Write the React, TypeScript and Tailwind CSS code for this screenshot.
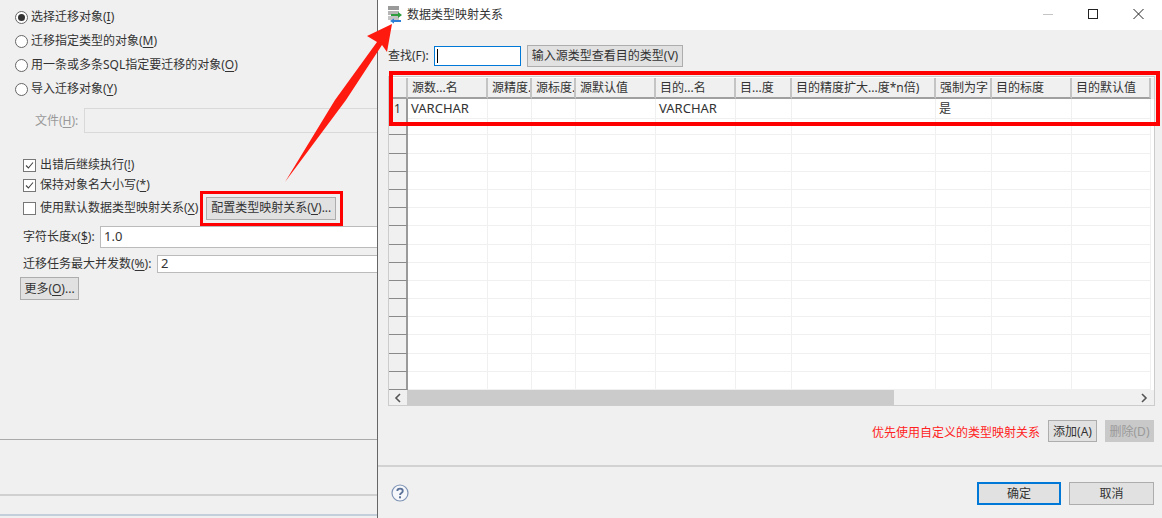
import React from "react";

const FONT = "[font-family:'Noto_Sans','Noto_Sans_CJK_SC',sans-serif]";
const ROW = "grid grid-cols-[19px_80px_44px_44px_80px_80px_56px_144px_56px_80px_79px]";

function M({ children }: { children: React.ReactNode }) {
  return <span className="underline underline-offset-2">{children}</span>;
}

function Radio({ on, children }: { on?: boolean; children: React.ReactNode }) {
  return (
    <div className="flex h-6 items-center pl-[15px]">
      <span className="flex h-[13px] w-[13px] items-center justify-center rounded-full border border-[#666] bg-white">
        {on && <span className="h-[7px] w-[7px] rounded-full bg-[#333]" />}
      </span>
      <span className="ml-[3px] whitespace-nowrap">{children}</span>
    </div>
  );
}

function Check({ on, children }: { on?: boolean; children: React.ReactNode }) {
  return (
    <div className="flex items-center">
      <span className="flex h-[13px] w-[13px] items-center justify-center border border-[#777] bg-white">
        {on && (
          <svg viewBox="0 0 11 11" className="h-[11px] w-[11px]" fill="none" stroke="#444" strokeWidth="1.1">
            <path d="M2 5.5 L4.4 8 L9 2.5" />
          </svg>
        )}
      </span>
      <span className="ml-1 whitespace-nowrap">{children}</span>
    </div>
  );
}

function LeftPanel() {
  return (
    <div className="flex h-full w-[378px] shrink-0 flex-col border-r border-[#666] bg-[#f0f0f0] pt-[5px]">
      <Radio on>选择迁移对象(<M>I</M>)</Radio>
      <Radio>迁移指定类型的对象(<M>M</M>)</Radio>
      <Radio>用一条或多条SQL指定要迁移的对象(<M>O</M>)</Radio>
      <Radio>导入迁移对象(<M>Y</M>)</Radio>
      <div className="mt-[7px] flex h-[25px] items-center pl-[35px] text-[#999]">
        <span className="w-[49px] whitespace-nowrap">文件(<M>H</M>):</span>
        <div className="h-full flex-1 border border-r-0 border-[#d9d9d9] bg-[#f0f0f0]" />
      </div>
      <div className="mt-[22px] flex h-5 items-center pl-[23px]">
        <Check on>出错后继续执行(<M>!</M>)</Check>
      </div>
      <div className="flex h-5 items-center pl-[23px]">
        <Check on>保持对象名大小写(<M>*</M>)</Check>
      </div>
      <div className="mt-px flex h-6 items-center pl-[23px]">
        <Check>使用默认数据类型映射关系(<M>X</M>)</Check>
        <button className="ml-[8px] h-[23px] w-[130px] whitespace-nowrap border border-[#adadad] bg-[#e1e1e1]">
          配置类型映射关系(<M>V</M>)...
        </button>
      </div>
      <div className="mt-[6px] flex h-[22px] items-center pl-[23px]">
        <span className="w-[77px] whitespace-nowrap">字符长度x(<M>$</M>):</span>
        <div className="flex h-full flex-1 items-center border border-r-0 border-[#bbb] bg-white pb-[2px] pl-[3px] text-[13px]">1.0</div>
      </div>
      <div className="mt-[7px] flex h-[18px] items-center pl-[23px]">
        <span className="w-[134px] whitespace-nowrap">迁移任务最大并发数(<M>%</M>):</span>
        <div className="flex h-full flex-1 items-center border border-r-0 border-[#bbb] bg-white pb-[2px] pl-[3px] text-[13px]">2</div>
      </div>
      <div className="mt-1 pl-5">
        <button className="h-[23px] w-[59px] whitespace-nowrap border border-[#adadad] bg-[#e1e1e1]">
          更多(<M>O</M>)...
        </button>
      </div>
      <div className="flex-1" />
      <div className="h-[55px] border-t border-[#aaa]" />
      <div className="h-5 border-t-2 border-[#d0d0d0]" />
      <div className="h-[4px] border-t-2 border-[#c3cfdb]" />
    </div>
  );
}

const HEAD = ["", "源数...名", "源精度.", "源标度.", "源默认值", "目的...名", "目...度", "目的精度扩大...度*n倍)", "强制为字", "目的标度", "目的默认值"];
const FIRST = ["1", "VARCHAR", "", "", "", "VARCHAR", "", "", "是", "", ""];

function DataGrid() {
  const rows = Array.from({ length: 16 }, (_, i) => i);
  return (
    <div className="mx-[10px] mt-[9px] flex h-[330px] w-[767px] flex-col border border-[#ccc] bg-white pt-px">
      <div className={`${ROW} h-[21px] bg-[#f0f0f0]`}>
        {HEAD.map((h, i) => (
          <div
            key={i}
            className="overflow-hidden whitespace-nowrap border-b-2 border-r-2 border-b-[#a0a0a0] border-r-[#c4c4c4] pl-[4px] leading-[20px]"
          >
            {h}
          </div>
        ))}
      </div>
      <div className="flex-1">
        {rows.map((r) => (
          <div key={r} className={`${ROW} h-[18.2px]`}>
            {(r === 0 ? FIRST : HEAD.map(() => "")).map((c, i) =>
              i === 0 ? (
                <div key={i} className="border-b border-r-2 border-b-[#8a8a8a] border-r-[#9a9a9a] bg-[#f0f0f0] pl-[5px] leading-[19px]">
                  {c}
                </div>
              ) : (
                <div key={i} className={`overflow-hidden whitespace-nowrap border-b border-r border-[#f0f0f0] pl-[3px] leading-[19px] ${c === "VARCHAR" ? "text-[13px]" : ""}`}>
                  {c}
                </div>
              )
            )}
          </div>
        ))}
      </div>
      <div className="flex h-[16px] bg-[#f0f0f0]">
        <div className="flex w-[18px] items-center justify-center">
          <svg viewBox="0 0 8 10" className="h-[10px] w-2" fill="none" stroke="#555" strokeWidth="1.6">
            <path d="M6 1 L2 5 L6 9" />
          </svg>
        </div>
        <div className="w-[487px] bg-[#cbcbcb]" />
        <div className="flex flex-1 items-center justify-end pr-[6px]">
          <svg viewBox="0 0 8 10" className="h-[10px] w-2" fill="none" stroke="#555" strokeWidth="1.6">
            <path d="M2 1 L6 5 L2 9" />
          </svg>
        </div>
      </div>
    </div>
  );
}

function Dialog() {
  return (
    <div className="flex h-full min-w-0 flex-1 flex-col bg-[#f0f0f0]">
      <div className="flex h-[30px] items-center bg-white pl-[10px]">
        <svg viewBox="0 0 14 18" className="mb-[1px] h-[18px] w-[14px]">
          <rect x="0" y="0" width="11" height="4" fill="#9a9a9a" />
          <rect x="0" y="5" width="11" height="4" fill="#b5b5b5" />
          <rect x="0" y="10" width="11" height="4" fill="#c4c4c4" />
          <path d="M3 8 H10 V6 L14 9 L10 12 V10 H3 Z" fill="#2e9e3f" />
          <path d="M13 14 H6 V12.5 L2 15 L6 17.5 V16 H13 Z" fill="#2b7fd6" />
        </svg>
        <span className="ml-[5px]">数据类型映射关系</span>
        <div className="flex-1" />
        <svg viewBox="0 0 120 20" className="mb-[2px] h-5 w-[120px]" fill="none">
          <path d="M1 10.5 H11" stroke="#c4c4c4" />
          <rect x="46.5" y="5.5" width="9" height="9" stroke="#222" />
          <path d="M91.5 5 L101.5 15 M101.5 5 L91.5 15" stroke="#222" />
        </svg>
      </div>
      <div className="mt-[15px] flex h-[22px] items-center pl-[10px]">
        <span className="w-[46px] whitespace-nowrap">查找(F):</span>
        <div className="flex h-[20px] w-[87px] items-center border border-[#0078d7] bg-white pl-[2px]">
          <span className="h-[14px] w-px bg-black" />
        </div>
        <button className="ml-[6px] h-[22px] w-[156px] whitespace-nowrap border border-[#adadad] bg-[#e1e1e1]">
          输入源类型查看目的类型(V)
        </button>
      </div>
      <DataGrid />
      <div className="mt-[14px] flex h-[22px] items-center justify-end pr-2">
        <span className="pt-[3px] text-[#ff2222]">优先使用自定义的类型映射关系</span>
        <button className="ml-2 h-[22px] w-[49px] whitespace-nowrap border border-[#adadad] bg-[#e1e1e1] pt-[2px]">添加(A)</button>
        <button className="ml-2 h-[22px] w-[49px] whitespace-nowrap bg-[#c9c9c9] pt-[2px] text-[#9a9a9a]">删除(D)</button>
      </div>
      <div className="mt-[23px] flex h-[52px] items-start justify-between border-t-2 border-[#d2d2d2] pl-[13px] pr-2 pt-[15px]">
        <svg viewBox="0 0 18 18" className="mt-[2px] h-[18px] w-[18px]" fill="none">
          <circle cx="9" cy="9" r="8" fill="#f5f7fa" stroke="#7f93b5" strokeWidth="1.2" />
          <path d="M6.3 7 C6.3 3.8 11.8 3.8 11.8 7 C11.8 9 9 9 9 11" stroke="#5d7299" strokeWidth="1.8" />
          <rect x="8" y="12.3" width="2" height="2" fill="#5d7299" />
        </svg>
        <div className="flex">
          <button className="h-[23px] w-[84px] border-2 border-[#0078d7] bg-[#e1e1e1]">确定</button>
          <button className="ml-2 h-[23px] w-[85px] border border-[#adadad] bg-[#e1e1e1]">取消</button>
        </div>
      </div>
    </div>
  );
}

export default function App() {
  return (
    <div className={`relative flex h-[518px] w-[1162px] overflow-hidden text-[12px] leading-none text-[#333] ${FONT}`}>
      <LeftPanel />
      <Dialog />
      {/* red annotations drawn over the screenshot */}
      <div className="pointer-events-none absolute left-[200px] top-[191px] h-[35px] w-[143px] border-[3px] border-[#ff0000]" />
      <div className="pointer-events-none absolute left-[389px] top-[71px] h-[55px] w-[771px] border-4 border-[#ff0000]" />
      <svg className="pointer-events-none absolute left-[280px] top-[15px] h-[175px] w-[115px]" viewBox="280 15 115 175">
        <path d="M285 182 L335 100 L377 42 L367 36 L392 24 L387 52 L382 45 L346 100 Z" fill="#ff1a10" />
      </svg>
    </div>
  );
}
